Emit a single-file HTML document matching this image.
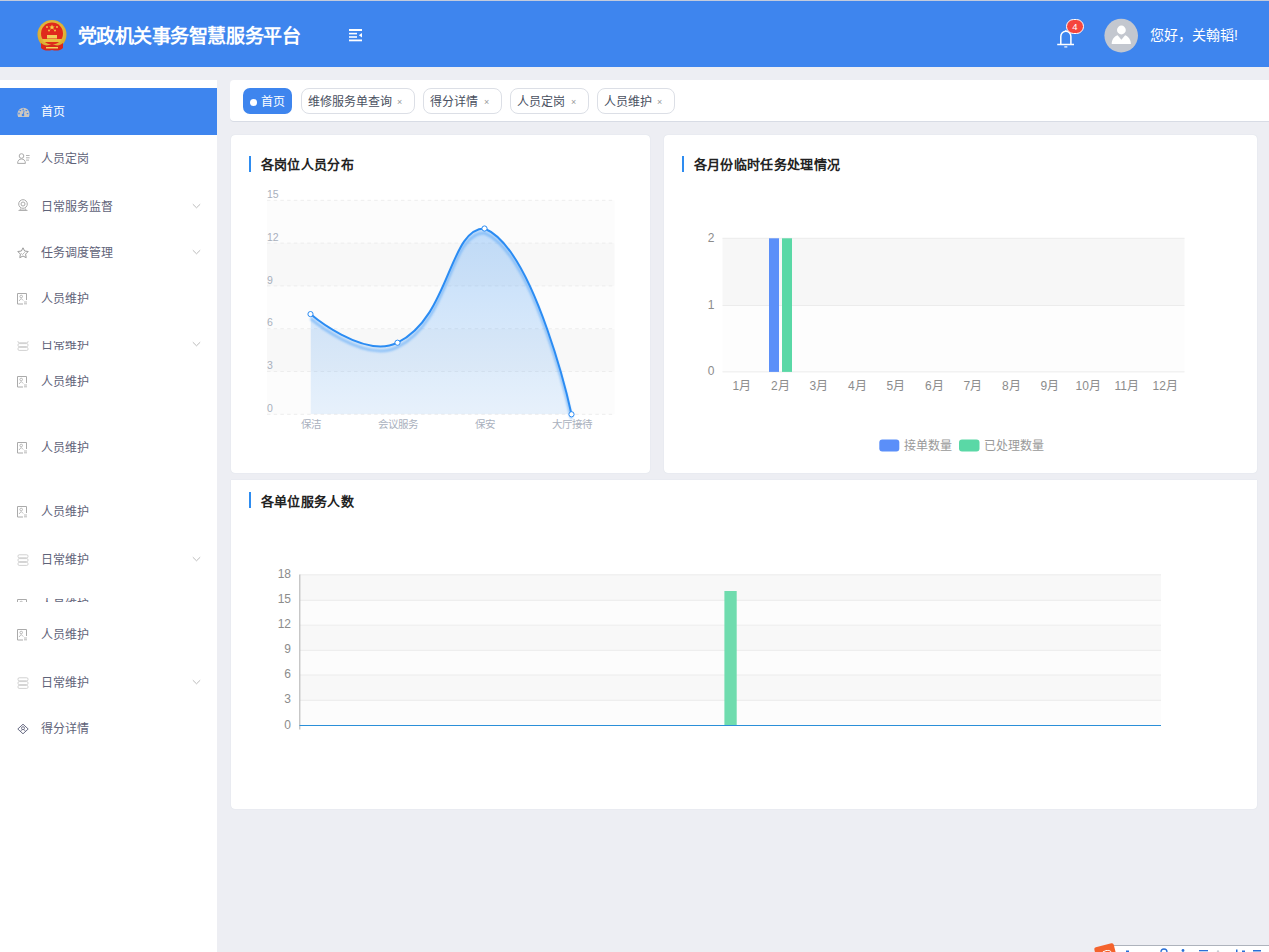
<!DOCTYPE html>
<html lang="zh-CN"><head><meta charset="utf-8">
<style>
*{margin:0;padding:0;box-sizing:border-box;}
html,body{width:1269px;height:952px;overflow:hidden;background:#edeef3;font-family:"Liberation Sans",sans-serif;}
.abs{position:absolute;}
#topline{left:0;top:0;width:1269px;height:2px;background:#c3cbdc;}
#header{left:0;top:1px;width:1269px;height:66.4px;background:#3e85ee;}
.title{left:77.6px;top:21.6px;font-size:19px;font-weight:bold;color:#fff;letter-spacing:-0.45px;line-height:28px;white-space:nowrap;}
.hello{left:1150px;top:23.6px;font-size:14px;color:#fff;line-height:20px;white-space:nowrap;}
#sidebar{left:0;top:80px;width:217px;height:872px;background:#fff;}
.st{font-size:12px;line-height:18px;color:#5f6379;white-space:nowrap;}
.mi{position:absolute;left:0;width:217px;height:46px;}
.mi .t{position:absolute;left:41px;top:14px;font-size:13px;line-height:18px;color:#4c5068;white-space:nowrap;}
.mi svg.ic{position:absolute;left:16px;top:17px;}
.mi .arr{position:absolute;left:191px;top:19px;}
.clip{position:absolute;left:0;width:217px;overflow:hidden;}
#tabs{left:230px;top:80px;width:1039px;height:41px;background:#fff;border-radius:4px 0 0 4px;box-shadow:0 1px 0 #d8dce5;}
.tt{font-size:12px;line-height:18px;color:#495060;white-space:nowrap;}
.tg{top:8px;height:26px;border:1px solid #dcdfe6;border-radius:8px;}
.tx{top:13px;font-size:9px;line-height:18px;color:#9a9a9a;}
.tag{position:absolute;top:8px;height:26px;border:1px solid #d8dce5;border-radius:7px;background:#fff;font-size:12.5px;color:#495060;line-height:24px;white-space:nowrap;padding-left:7px;}
.tag .x{position:absolute;right:8px;top:0;font-size:10px;color:#888;}
.card{position:absolute;background:#fff;border-radius:4px;box-shadow:0 0 1px #c9d0dd;}
.ct{position:absolute;font-size:13px;letter-spacing:0.35px;font-weight:bold;color:#222;white-space:nowrap;line-height:18px;}
.cbar{position:absolute;width:2px;height:15.5px;background:#2e8cf0;}
svg text{font-family:"Liberation Sans",sans-serif;}
</style></head>
<body>
<div id="topline" class="abs"></div>
<div id="header" class="abs">
  <!-- emblem -->
  <svg class="abs" style="left:36px;top:18px" width="32" height="34" viewBox="0 0 32 34">
    <defs><radialGradient id="gold" cx="50%" cy="45%" r="55%"><stop offset="0" stop-color="#f7de6a"/><stop offset="1" stop-color="#d9a628"/></radialGradient></defs>
    <circle cx="16" cy="15.5" r="14.5" fill="url(#gold)"/>
    <circle cx="16" cy="14.5" r="11" fill="#e02a1c"/>
    <path d="M16 5.5l.8 2h2l-1.6 1.2.6 2-1.8-1.2-1.8 1.2.6-2-1.6-1.2h2z" fill="#f4d34a"/>
    <circle cx="11" cy="8" r="0.9" fill="#f4d34a"/><circle cx="21" cy="8" r="0.9" fill="#f4d34a"/>
    <circle cx="13" cy="11.5" r="0.9" fill="#f4d34a"/><circle cx="19" cy="11.5" r="0.9" fill="#f4d34a"/>
    <rect x="11" y="16" width="10" height="3.5" fill="#f1d05a"/>
    <path d="M6 20h20l-2 3H8z" fill="#e9c040"/>
    <path d="M5 24c3 3 7 3 11 1 4 2 8 2 11-1v5c-3 3-7 3-11 2-4 1-8 1-11-2z" fill="#d8261b"/>
    <path d="M10 28h12v1.5H10z" fill="#f2d15a"/>
  </svg>
  <div class="abs title">党政机关事务智慧服务平台</div>
  <!-- menu toggle -->
  <svg class="abs" style="left:348px;top:27px" width="15" height="14" viewBox="0 0 15 14">
    <rect x="1" y="1" width="13" height="2" fill="#fff"/>
    <rect x="1" y="4.8" width="8" height="1.6" fill="#fff"/>
    <rect x="1" y="8.2" width="8" height="1.6" fill="#fff"/>
    <rect x="1" y="11.5" width="13" height="1.8" fill="#fff"/>
    <path d="M14 5L10.8 7.2 14 9.5z" fill="#fff"/>
  </svg>
  <!-- bell -->
  <svg class="abs" style="left:1055px;top:24px" width="22" height="24" viewBox="0 0 22 24">
    <path d="M5.8 19.4V11.4A5.05 5.05 0 0 1 15.9 11.4V19.4" fill="none" stroke="#fff" stroke-width="1.5"/>
    <path d="M9.6 6.6L10.85 5.4 12.1 6.6" fill="none" stroke="#fff" stroke-width="1"/>
    <path d="M2.2 19.5h16.8" stroke="#fff" stroke-width="1.5"/>
    <path d="M9.3 21.9h3" stroke="#fff" stroke-width="1.2"/>
  </svg>
  <div class="abs" style="left:1066px;top:18.3px;width:18px;height:15px;border-radius:8px;background:#f5453d;border:1px solid #fff;color:#fff;font-size:9.5px;line-height:13px;text-align:center;">4</div>
  <!-- avatar -->
  <svg class="abs" style="left:1104px;top:17px" width="35" height="36" viewBox="0 0 35 36">
    <circle cx="17.2" cy="17.6" r="16.8" fill="#c3c7cf"/>
    <circle cx="17.4" cy="12" r="4.4" fill="#fff"/>
    <path d="M7.7 26.1C7.7 22 10 18.5 13.6 17.3L17.4 21.7 21.1 17.3C24.5 18.5 26.9 22 26.9 26.1Z" fill="#fff"/>
  </svg>
  <div class="abs hello">您好，关翰韬!</div>
</div>

<div id="sidebar" class="abs">
<div class="abs" style="left:0;top:8px;width:217px;height:47px;background:#3e85ee"></div><div class="abs st" style="left:41px;top:23.3px;color:#fff">首页</div><div class="abs" style="left:16.5px;top:27px;line-height:0"><svg width="14" height="12" viewBox="0 0 14 12"><path d="M1.2 9.9C0.6 8.9 0.5 7.8 0.5 6.8A6 6 0 0 1 12.5 6.8C12.5 7.8 12.4 8.9 11.8 9.9Z" fill="#cbc6bf"/><ellipse cx="6.1" cy="2.4" rx="0.7" ry="1" fill="#3e85ee"/><ellipse cx="3.3" cy="3.6" rx="1" ry="0.7" fill="#3e85ee"/><ellipse cx="9.3" cy="3.6" rx="1" ry="0.7" fill="#3e85ee"/><ellipse cx="2" cy="6.5" rx="0.7" ry="0.9" fill="#3e85ee"/><ellipse cx="10.5" cy="6.6" rx="1" ry="0.6" fill="#3e85ee"/><path d="M7.1 3.8L6.3 7.5" stroke="#3e85ee" stroke-width="0.9"/><circle cx="6" cy="8" r="1.3" fill="#3e85ee"/></svg></div>
<div class="abs st" style="left:41px;top:70.0px">人员定岗</div><div class="abs" style="left:17px;top:73.0px;line-height:0"><svg width="13" height="11" viewBox="0 0 13 11"><circle cx="4.5" cy="3" r="2.3" fill="none" stroke="#aaa" stroke-width="1"/><path d="M0.6 10.4c0-3 1.7-4.4 3.9-4.4s3.9 1.4 3.9 4.4z" fill="none" stroke="#aaa" stroke-width="1"/><path d="M9 2.5h3.6M9 4.8h3.6M9 7.1h3" stroke="#aaa" stroke-width="0.9"/></svg></div>
<div class="abs st" style="left:41px;top:117.7px">日常服务监督</div><div class="abs" style="left:17px;top:119.3px;line-height:0"><svg width="12" height="12" viewBox="0 0 12 12"><circle cx="6" cy="5" r="4.3" fill="none" stroke="#aaa" stroke-width="1"/><circle cx="6" cy="5" r="2" fill="none" stroke="#aaa" stroke-width="1"/><path d="M3.5 9.5l-.5 1.5h6l-.5-1.5M1.5 11.5h9" stroke="#aaa" stroke-width="0.9" fill="none"/></svg></div><div class="abs" style="left:192px;top:123.2px;line-height:0"><svg width="9" height="6" viewBox="0 0 9 6"><path d="M0.8 1.2L4.5 4.8 8.2 1.2" fill="none" stroke="#b4b4b4" stroke-width="0.9"/></svg></div>
<div class="abs st" style="left:41px;top:163.7px">任务调度管理</div><div class="abs" style="left:17px;top:166.7px;line-height:0"><svg width="12" height="12" viewBox="0 0 12 12"><path d="M6 0.8l1.6 3.2 3.6.5-2.6 2.6.6 3.6L6 9l-3.2 1.7.6-3.6L0.8 4.5l3.6-.5z" fill="none" stroke="#9a9a9a" stroke-width="1" stroke-linejoin="round"/><path d="M4.2 6.3l1.3 1.2 2.3-2.3" fill="none" stroke="#aaa" stroke-width="0.8"/></svg></div><div class="abs" style="left:192px;top:169.2px;line-height:0"><svg width="9" height="6" viewBox="0 0 9 6"><path d="M0.8 1.2L4.5 4.8 8.2 1.2" fill="none" stroke="#b4b4b4" stroke-width="0.9"/></svg></div>
<div class="abs st" style="left:41px;top:210.2px">人员维护</div><div class="abs" style="left:17px;top:213.2px;line-height:0"><svg width="11" height="12" viewBox="0 0 11 12"><path d="M9.5 7V0.5H0.5v10.5H6" fill="none" stroke="#aaa" stroke-width="1"/><circle cx="4.2" cy="3.5" r="1.3" fill="none" stroke="#aaa" stroke-width="0.8"/><path d="M2 8l2.2-2.5 2 2" fill="none" stroke="#aaa" stroke-width="0.8"/><path d="M7 9h3M7 10.8h3" stroke="#aaa" stroke-width="0.8"/></svg></div>
<div class="abs" style="left:0;top:261px;width:217px;height:59px;overflow:hidden"><div class="abs" style="left:0;top:-261px;width:217px;height:1px"><div class="abs st" style="left:41px;top:255.5px">日常维护</div><div class="abs" style="left:17px;top:258.5px;line-height:0"><svg width="12" height="12" viewBox="0 0 12 12"><rect x="1" y="0.8" width="10" height="3" rx="1.2" fill="none" stroke="#ccc" stroke-width="0.9"/><rect x="1" y="4.6" width="10" height="3" rx="1.2" fill="none" stroke="#ccc" stroke-width="0.9"/><rect x="1" y="8.4" width="10" height="3" rx="1.2" fill="none" stroke="#ccc" stroke-width="0.9"/></svg></div><div class="abs" style="left:192px;top:261.0px;line-height:0"><svg width="9" height="6" viewBox="0 0 9 6"><path d="M0.8 1.2L4.5 4.8 8.2 1.2" fill="none" stroke="#b4b4b4" stroke-width="0.9"/></svg></div></div></div>
<div class="abs st" style="left:41px;top:292.9px">人员维护</div><div class="abs" style="left:17px;top:295.9px;line-height:0"><svg width="11" height="12" viewBox="0 0 11 12"><path d="M9.5 7V0.5H0.5v10.5H6" fill="none" stroke="#aaa" stroke-width="1"/><circle cx="4.2" cy="3.5" r="1.3" fill="none" stroke="#aaa" stroke-width="0.8"/><path d="M2 8l2.2-2.5 2 2" fill="none" stroke="#aaa" stroke-width="0.8"/><path d="M7 9h3M7 10.8h3" stroke="#aaa" stroke-width="0.8"/></svg></div>
<div class="abs st" style="left:41px;top:359.3px">人员维护</div><div class="abs" style="left:17px;top:362.3px;line-height:0"><svg width="11" height="12" viewBox="0 0 11 12"><path d="M9.5 7V0.5H0.5v10.5H6" fill="none" stroke="#aaa" stroke-width="1"/><circle cx="4.2" cy="3.5" r="1.3" fill="none" stroke="#aaa" stroke-width="0.8"/><path d="M2 8l2.2-2.5 2 2" fill="none" stroke="#aaa" stroke-width="0.8"/><path d="M7 9h3M7 10.8h3" stroke="#aaa" stroke-width="0.8"/></svg></div>
<div class="abs st" style="left:41px;top:423.2px">人员维护</div><div class="abs" style="left:17px;top:426.2px;line-height:0"><svg width="11" height="12" viewBox="0 0 11 12"><path d="M9.5 7V0.5H0.5v10.5H6" fill="none" stroke="#aaa" stroke-width="1"/><circle cx="4.2" cy="3.5" r="1.3" fill="none" stroke="#aaa" stroke-width="0.8"/><path d="M2 8l2.2-2.5 2 2" fill="none" stroke="#aaa" stroke-width="0.8"/><path d="M7 9h3M7 10.8h3" stroke="#aaa" stroke-width="0.8"/></svg></div>
<div class="abs st" style="left:41px;top:470.5px">日常维护</div><div class="abs" style="left:17px;top:473.5px;line-height:0"><svg width="12" height="12" viewBox="0 0 12 12"><rect x="1" y="0.8" width="10" height="3" rx="1.2" fill="none" stroke="#ccc" stroke-width="0.9"/><rect x="1" y="4.6" width="10" height="3" rx="1.2" fill="none" stroke="#ccc" stroke-width="0.9"/><rect x="1" y="8.4" width="10" height="3" rx="1.2" fill="none" stroke="#ccc" stroke-width="0.9"/></svg></div><div class="abs" style="left:192px;top:476.0px;line-height:0"><svg width="9" height="6" viewBox="0 0 9 6"><path d="M0.8 1.2L4.5 4.8 8.2 1.2" fill="none" stroke="#b4b4b4" stroke-width="0.9"/></svg></div>
<div class="abs" style="left:0;top:500px;width:217px;height:22px;overflow:hidden"><div class="abs" style="left:0;top:-500px;width:217px;height:1px"><div class="abs st" style="left:41px;top:516.0px">人员维护</div><div class="abs" style="left:17px;top:519.0px;line-height:0"><svg width="11" height="12" viewBox="0 0 11 12"><path d="M9.5 7V0.5H0.5v10.5H6" fill="none" stroke="#aaa" stroke-width="1"/><circle cx="4.2" cy="3.5" r="1.3" fill="none" stroke="#aaa" stroke-width="0.8"/><path d="M2 8l2.2-2.5 2 2" fill="none" stroke="#aaa" stroke-width="0.8"/><path d="M7 9h3M7 10.8h3" stroke="#aaa" stroke-width="0.8"/></svg></div></div></div>
<div class="abs st" style="left:41px;top:546.2px">人员维护</div><div class="abs" style="left:17px;top:549.2px;line-height:0"><svg width="11" height="12" viewBox="0 0 11 12"><path d="M9.5 7V0.5H0.5v10.5H6" fill="none" stroke="#aaa" stroke-width="1"/><circle cx="4.2" cy="3.5" r="1.3" fill="none" stroke="#aaa" stroke-width="0.8"/><path d="M2 8l2.2-2.5 2 2" fill="none" stroke="#aaa" stroke-width="0.8"/><path d="M7 9h3M7 10.8h3" stroke="#aaa" stroke-width="0.8"/></svg></div>
<div class="abs st" style="left:41px;top:593.5px">日常维护</div><div class="abs" style="left:17px;top:596.5px;line-height:0"><svg width="12" height="12" viewBox="0 0 12 12"><rect x="1" y="0.8" width="10" height="3" rx="1.2" fill="none" stroke="#ccc" stroke-width="0.9"/><rect x="1" y="4.6" width="10" height="3" rx="1.2" fill="none" stroke="#ccc" stroke-width="0.9"/><rect x="1" y="8.4" width="10" height="3" rx="1.2" fill="none" stroke="#ccc" stroke-width="0.9"/></svg></div><div class="abs" style="left:192px;top:599.0px;line-height:0"><svg width="9" height="6" viewBox="0 0 9 6"><path d="M0.8 1.2L4.5 4.8 8.2 1.2" fill="none" stroke="#b4b4b4" stroke-width="0.9"/></svg></div>
<div class="abs st" style="left:41px;top:640.0px">得分详情</div><div class="abs" style="left:17px;top:643.0px;line-height:0"><svg width="12" height="12" viewBox="0 0 12 12"><path d="M0.8 6L6 1.2 11.2 6 6 10.8z" fill="none" stroke="#6a6d85" stroke-width="1" stroke-linejoin="round"/><circle cx="6" cy="5.2" r="1.5" fill="none" stroke="#6a6d85" stroke-width="0.9"/><path d="M3.8 8.3c.5-1.3 1.2-1.8 2.2-1.8s1.7.5 2.2 1.8" fill="none" stroke="#6a6d85" stroke-width="0.9"/></svg></div>
</div>

<div id="tabs" class="abs">
  <div class="abs" style="left:13px;top:8px;width:49px;height:26px;border-radius:7px;background:#3e85ee;"></div>
  <div class="abs" style="left:19.5px;top:18.5px;width:7px;height:7px;border-radius:50%;background:#fff;"></div>
  <div class="abs tt" style="left:31px;top:13px;color:#fff">首页</div>
  <div class="abs tg" style="left:71px;width:114px;"></div>
  <div class="abs tt" style="left:78px;top:13px">维修服务单查询</div>
  <div class="abs tx" style="left:167px">×</div>
  <div class="abs tg" style="left:193px;width:79px;"></div>
  <div class="abs tt" style="left:200px;top:13px">得分详情</div>
  <div class="abs tx" style="left:254px">×</div>
  <div class="abs tg" style="left:280px;width:79px;"></div>
  <div class="abs tt" style="left:287px;top:13px">人员定岗</div>
  <div class="abs tx" style="left:341px">×</div>
  <div class="abs tg" style="left:367px;width:78px;"></div>
  <div class="abs tt" style="left:374px;top:13px">人员维护</div>
  <div class="abs tx" style="left:427px">×</div>
</div>

<div class="card" style="left:231px;top:135px;width:419px;height:338px;"></div>
<div class="card" style="left:664px;top:135px;width:593px;height:338px;"></div>
<div class="card" style="left:231px;top:480px;width:1026px;height:329px;border-radius:0 0 4px 4px;"></div>
<!--CHARTS-->
<div class="cbar" style="left:249px;top:156px"></div>
<div class="ct" style="left:260.5px;top:156px">各岗位人员分布</div>
<div class="cbar" style="left:682px;top:156px"></div>
<div class="ct" style="left:693.5px;top:156px">各月份临时任务处理情况</div>
<div class="cbar" style="left:249px;top:492px"></div>
<div class="ct" style="left:260.5px;top:492.5px">各单位服务人数</div>
<svg class="abs" style="left:0;top:0" width="1269" height="952" viewBox="0 0 1269 952">
<rect x="267" y="371.5" width="347.5" height="42.8" fill="#fcfcfc"/>
<rect x="267" y="328.7" width="347.5" height="42.8" fill="#f8f8f8"/>
<rect x="267" y="285.9" width="347.5" height="42.8" fill="#fcfcfc"/>
<rect x="267" y="243.1" width="347.5" height="42.8" fill="#f8f8f8"/>
<rect x="267" y="200.3" width="347.5" height="42.8" fill="#fcfcfc"/>
<line x1="267" y1="414.3" x2="614.5" y2="414.3" stroke="#ededed" stroke-width="1" stroke-dasharray="3.5 3.2"/>
<line x1="267" y1="371.5" x2="614.5" y2="371.5" stroke="#ededed" stroke-width="1" stroke-dasharray="3.5 3.2"/>
<line x1="267" y1="328.7" x2="614.5" y2="328.7" stroke="#ededed" stroke-width="1" stroke-dasharray="3.5 3.2"/>
<line x1="267" y1="285.9" x2="614.5" y2="285.9" stroke="#ededed" stroke-width="1" stroke-dasharray="3.5 3.2"/>
<line x1="267" y1="243.1" x2="614.5" y2="243.1" stroke="#ededed" stroke-width="1" stroke-dasharray="3.5 3.2"/>
<line x1="267" y1="200.3" x2="614.5" y2="200.3" stroke="#ededed" stroke-width="1" stroke-dasharray="3.5 3.2"/>
<text x="267" y="412.0" font-size="10.5" fill="#a9b0bd">0</text>
<text x="267" y="369.2" font-size="10.5" fill="#a9b0bd">3</text>
<text x="267" y="326.4" font-size="10.5" fill="#a9b0bd">6</text>
<text x="267" y="283.6" font-size="10.5" fill="#a9b0bd">9</text>
<text x="267" y="240.8" font-size="10.5" fill="#a9b0bd">12</text>
<text x="267" y="198.0" font-size="10.5" fill="#a9b0bd">15</text>
<text x="310.5" y="428" font-size="10.5" fill="#a9b0bd" text-anchor="middle">保洁</text>
<text x="397.5" y="428" font-size="10.5" fill="#a9b0bd" text-anchor="middle">会议服务</text>
<text x="484.5" y="428" font-size="10.5" fill="#a9b0bd" text-anchor="middle">保安</text>
<text x="571.5" y="428" font-size="10.5" fill="#a9b0bd" text-anchor="middle">大厅接待</text>
<defs><linearGradient id="ag" x1="0" y1="0" x2="0" y2="1"><stop offset="0" stop-color="#2b8cf3" stop-opacity="0.28"/><stop offset="1" stop-color="#2b8cf3" stop-opacity="0.1"/></linearGradient><filter id="glow" x="-20%" y="-20%" width="140%" height="160%"><feGaussianBlur stdDeviation="1.3"/></filter></defs>
<path d="M310.5,314.1 C310.5,314.1 363.6,359.4 397.5,342.7 C450.6,316.6 448.7,228.5 484.5,228.5 C535.7,249.6 571.5,414.3 571.5,414.3 L571.5,414.3 L310.5,414.3 Z" fill="url(#ag)" transform="translate(0,0)" clip-path="url(#c1)"/>
<clipPath id="c1"><rect x="310.5" y="150" width="262" height="264.3"/></clipPath>
<path d="M310.5,314.1 C310.5,314.1 363.6,359.4 397.5,342.7 C450.6,316.6 448.7,228.5 484.5,228.5 C535.7,249.6 571.5,414.3 571.5,414.3" fill="none" stroke="#6db1f8" stroke-width="2.6" opacity="0.75" filter="url(#glow)" transform="translate(0,4.5)"/>
<path d="M310.5,314.1 C310.5,314.1 363.6,359.4 397.5,342.7 C450.6,316.6 448.7,228.5 484.5,228.5 C535.7,249.6 571.5,414.3 571.5,414.3" fill="none" stroke="#2b8cf3" stroke-width="2"/>
<circle cx="310.5" cy="314.1" r="2.6" fill="#fff" stroke="#2b8cf3" stroke-width="1"/>
<circle cx="397.5" cy="342.7" r="2.6" fill="#fff" stroke="#2b8cf3" stroke-width="1"/>
<circle cx="484.5" cy="228.5" r="2.6" fill="#fff" stroke="#2b8cf3" stroke-width="1"/>
<circle cx="571.5" cy="414.3" r="2.6" fill="#fff" stroke="#2b8cf3" stroke-width="1"/>
<rect x="722.5" y="238.3" width="462.0" height="67.2" fill="#f7f7f7"/>
<rect x="722.5" y="305.5" width="462.0" height="66.4" fill="#fdfdfd"/>
<line x1="722.5" y1="238.3" x2="1184.5" y2="238.3" stroke="#ececec" stroke-width="1"/>
<line x1="722.5" y1="305.5" x2="1184.5" y2="305.5" stroke="#ececec" stroke-width="1"/>
<line x1="722.5" y1="371.9" x2="1184.5" y2="371.9" stroke="#ececec" stroke-width="1"/>
<text x="714.5" y="241.6" font-size="12" fill="#8c8c8c" text-anchor="end">2</text>
<text x="714.5" y="308.8" font-size="12" fill="#8c8c8c" text-anchor="end">1</text>
<text x="714.5" y="375.2" font-size="12" fill="#8c8c8c" text-anchor="end">0</text>
<text x="741.75" y="389.5" font-size="12" fill="#8c8c8c" text-anchor="middle">1月</text>
<text x="780.25" y="389.5" font-size="12" fill="#8c8c8c" text-anchor="middle">2月</text>
<text x="818.75" y="389.5" font-size="12" fill="#8c8c8c" text-anchor="middle">3月</text>
<text x="857.25" y="389.5" font-size="12" fill="#8c8c8c" text-anchor="middle">4月</text>
<text x="895.75" y="389.5" font-size="12" fill="#8c8c8c" text-anchor="middle">5月</text>
<text x="934.25" y="389.5" font-size="12" fill="#8c8c8c" text-anchor="middle">6月</text>
<text x="972.75" y="389.5" font-size="12" fill="#8c8c8c" text-anchor="middle">7月</text>
<text x="1011.25" y="389.5" font-size="12" fill="#8c8c8c" text-anchor="middle">8月</text>
<text x="1049.75" y="389.5" font-size="12" fill="#8c8c8c" text-anchor="middle">9月</text>
<text x="1088.25" y="389.5" font-size="12" fill="#8c8c8c" text-anchor="middle">10月</text>
<text x="1126.75" y="389.5" font-size="12" fill="#8c8c8c" text-anchor="middle">11月</text>
<text x="1165.25" y="389.5" font-size="12" fill="#8c8c8c" text-anchor="middle">12月</text>
<rect x="769" y="238.3" width="10" height="133.6" fill="#5b8ff9"/>
<rect x="782" y="238.3" width="10" height="133.6" fill="#5ad8a6"/>
<rect x="879.3" y="439.5" width="20" height="12" rx="3" fill="#5b8ff9"/>
<text x="903.5" y="449.5" font-size="12" fill="#999">接单数量</text>
<rect x="959" y="439.5" width="20.5" height="12" rx="3" fill="#5ad8a6"/>
<text x="984" y="449.5" font-size="12" fill="#999">已处理数量</text>
<rect x="300" y="700.3" width="861" height="25.2" fill="#fcfcfc"/>
<rect x="300" y="675" width="861" height="25.3" fill="#f8f8f8"/>
<rect x="300" y="650.4" width="861" height="24.6" fill="#fcfcfc"/>
<rect x="300" y="625.2" width="861" height="25.2" fill="#f8f8f8"/>
<rect x="300" y="600.3" width="861" height="24.9" fill="#fcfcfc"/>
<rect x="300" y="574.8" width="861" height="25.5" fill="#f8f8f8"/>
<line x1="300" y1="700.3" x2="1161" y2="700.3" stroke="#ececec" stroke-width="1"/>
<line x1="300" y1="675" x2="1161" y2="675" stroke="#ececec" stroke-width="1"/>
<line x1="300" y1="650.4" x2="1161" y2="650.4" stroke="#ececec" stroke-width="1"/>
<line x1="300" y1="625.2" x2="1161" y2="625.2" stroke="#ececec" stroke-width="1"/>
<line x1="300" y1="600.3" x2="1161" y2="600.3" stroke="#ececec" stroke-width="1"/>
<line x1="300" y1="574.8" x2="1161" y2="574.8" stroke="#ececec" stroke-width="1"/>
<text x="291" y="728.5" font-size="12" fill="#8c8c8c" text-anchor="end">0</text>
<text x="291" y="703.3" font-size="12" fill="#8c8c8c" text-anchor="end">3</text>
<text x="291" y="678.0" font-size="12" fill="#8c8c8c" text-anchor="end">6</text>
<text x="291" y="653.4" font-size="12" fill="#8c8c8c" text-anchor="end">9</text>
<text x="291" y="628.2" font-size="12" fill="#8c8c8c" text-anchor="end">12</text>
<text x="291" y="603.3" font-size="12" fill="#8c8c8c" text-anchor="end">15</text>
<text x="291" y="577.8" font-size="12" fill="#8c8c8c" text-anchor="end">18</text>
<rect x="724.4" y="591" width="12.3" height="134.5" fill="#6fdcae"/>
<line x1="299.8" y1="574.5" x2="299.8" y2="729.5" stroke="#b0b0b0" stroke-width="1"/>
<line x1="299.5" y1="725.5" x2="1161" y2="725.5" stroke="#2a8fd8" stroke-width="1"/>
</svg>
<!--/CHARTS-->

<!--SOGOU-->
<div class="abs" style="left:1112px;top:944.5px;width:157px;height:8px;background:#fff;border-top:1px solid #aeb3bc;"></div>
<div class="abs" style="left:1096px;top:945px;width:20px;height:20px;background:#f4632d;border-radius:2px;transform:rotate(-14deg);"></div>
<div class="abs" style="left:1101px;top:950px;width:11px;height:6px;border:1.5px solid #fff;border-radius:5px 5px 0 0;border-bottom:none;transform:rotate(-14deg);"></div>
<svg class="abs" style="left:1112px;top:944px" width="157" height="8" viewBox="0 0 157 8">
<rect x="14" y="6.5" width="3" height="2" fill="#2a6fd6"/>
<circle cx="52" cy="8" r="3" fill="none" stroke="#2a6fd6" stroke-width="1.3"/>
<circle cx="71" cy="6.5" r="1.4" fill="#2a6fd6"/>
<rect x="87" y="6" width="9" height="1.3" fill="#2a6fd6"/>
<circle cx="106" cy="7.5" r="1.2" fill="#c8ccd4"/>
<rect x="124" y="5.5" width="1.5" height="3" fill="#2a6fd6"/>
<rect x="130" y="6.5" width="3" height="2" fill="#2a6fd6"/>
<rect x="141" y="6" width="8" height="1.5" fill="#2a6fd6"/>
</svg>
<!--/SOGOU-->
</body></html>
